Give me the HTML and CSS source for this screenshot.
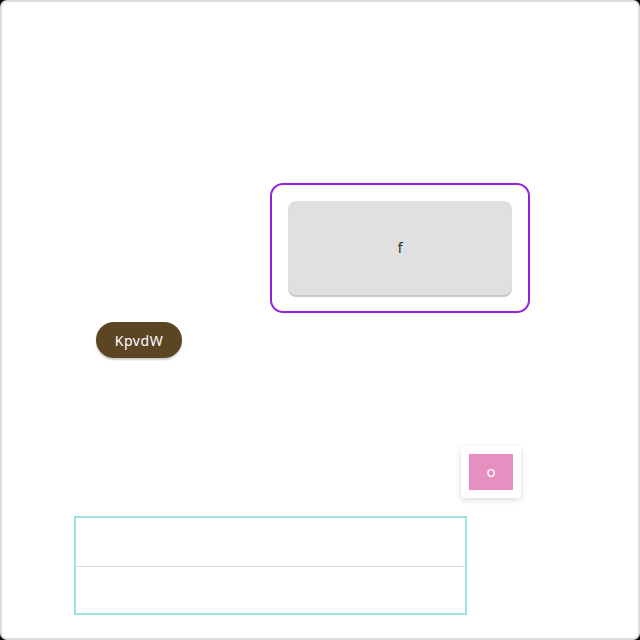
FILE: index.html
```html
<!DOCTYPE html>
<html lang="en">
<head>
    <meta charset="UTF-8">
    <title>Canvas</title>
    <link rel="stylesheet" href="styles.css">
</head>
<body>
    <div class="frame">
        <div class="outline-box">
            <div class="key">f</div>
        </div>
        <div class="pill">KpvdW</div>
        <div class="swatch-card">
            <div class="swatch">o</div>
        </div>
        <div class="table-box">
            <div class="row"></div>
            <div class="row"></div>
        </div>
    </div>
</body>
</html>
```

FILE: styles.css
```css
html {
    background-color: #000;
}
body {
    margin: 0;
    padding: 0;
    font-family: "Noto Sans", Arial, sans-serif;
}
.frame {
    width: 640px;
    height: 640px;
    box-sizing: border-box;
    background-color: #fff;
    border: 2px solid #dedede;
    border-radius: 7px;
    display: flex;
    flex-direction: column;
    align-items: flex-start;
    overflow: hidden;
}
.outline-box {
    margin: 181px 0 0 268px;
    width: 260px;
    height: 130px;
    box-sizing: border-box;
    border: 2px solid #9322dc;
    border-radius: 13px;
    padding: 16px;
}
.key {
    height: 94px;
    padding-bottom: 2px;
    box-sizing: border-box;
    background-color: #e0e0e0;
    border-radius: 8px;
    box-shadow: 0 2px 0 #cacaca;
    display: flex;
    align-items: center;
    justify-content: center;
    font-size: 15px;
    color: #333;
}
.pill {
    margin: 9px 0 0 94px;
    width: 86px;
    height: 36px;
    border-radius: 18px;
    background-color: #5c4525;
    color: #fff;
    font-size: 14px;
    letter-spacing: 0.6px;
    display: flex;
    align-items: center;
    justify-content: center;
    box-shadow: 0 2px 2px rgba(0, 0, 0, 0.2);
}
.swatch-card {
    margin: 88px 0 0 459px;
    padding: 8px;
    background-color: #fff;
    border-radius: 4px;
    box-shadow: 0 2px 6px rgba(0, 0, 0, 0.15);
}
.swatch {
    width: 44px;
    height: 36px;
    padding-bottom: 3px;
    box-sizing: border-box;
    background-color: #e68fc0;
    color: #fff;
    font-size: 15px;
    display: flex;
    align-items: center;
    justify-content: center;
}
.table-box {
    margin: 18px 0 0 72px;
    width: 393px;
    box-sizing: border-box;
    border: 2px solid #a2e1e1;
}
.row {
    height: 48px;
}
.row + .row {
    height: 46px;
    border-top: 1px solid #ddd;
}
```
